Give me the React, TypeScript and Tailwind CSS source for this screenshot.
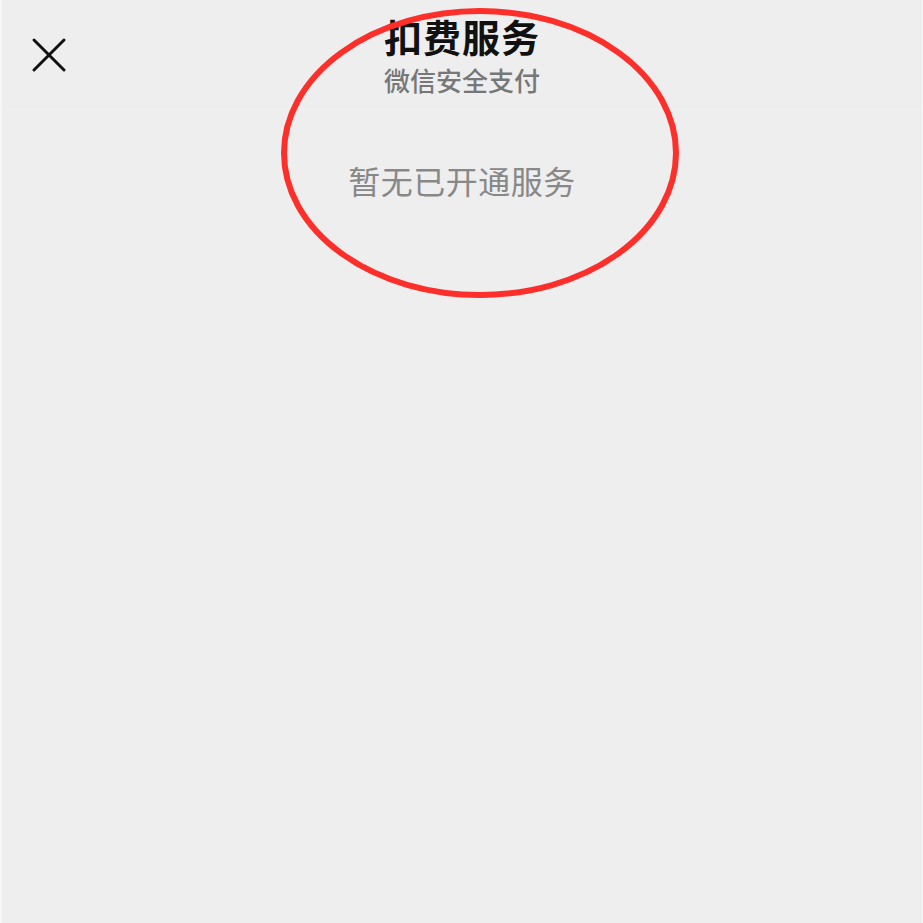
import React from 'react';

const CJK = "font-['Noto_Sans_CJK_SC','Noto_Sans',sans-serif]";

export default function App() {
  return (
    <div className={`relative h-[923px] w-[923px] overflow-hidden border-l-2 border-r border-l-[#f7f7f7] border-r-[#f7f7f7] bg-[#eeeeee] ${CJK}`}>
      <header className="grid h-[110px] grid-cols-[1fr_auto_1fr] border-b border-[#f2f2f2]">
        <div className="flex items-start pl-[28px] pt-[37px]">
          <svg width="38" height="36" viewBox="0 0 38 36" fill="none" stroke="#111" strokeWidth="3" strokeLinecap="round">
            <path d="M4 3 L34 33 M34 3 L4 33" />
          </svg>
        </div>
        <div className="flex flex-col items-center pt-[16px]">
          <h1 className="text-[38px] font-bold leading-[40px] tracking-[1px] text-[#111]">扣费服务</h1>
          <p className="mt-[8px] text-[26px] font-medium leading-[32px] text-[#777]">微信安全支付</p>
        </div>
        <div />
      </header>

      <main className="flex justify-center pt-[50px]">
        <p className="text-[32px] leading-[40px] tracking-[0.5px] text-[#888]">暂无已开通服务</p>
      </main>

      <svg className="pointer-events-none absolute left-0 top-0" width="923" height="923" viewBox="0 0 923 923">
        <ellipse cx="478" cy="153" rx="196" ry="142" fill="none" stroke="#fd2f2a" strokeWidth="6" />
      </svg>
    </div>
  );
}
